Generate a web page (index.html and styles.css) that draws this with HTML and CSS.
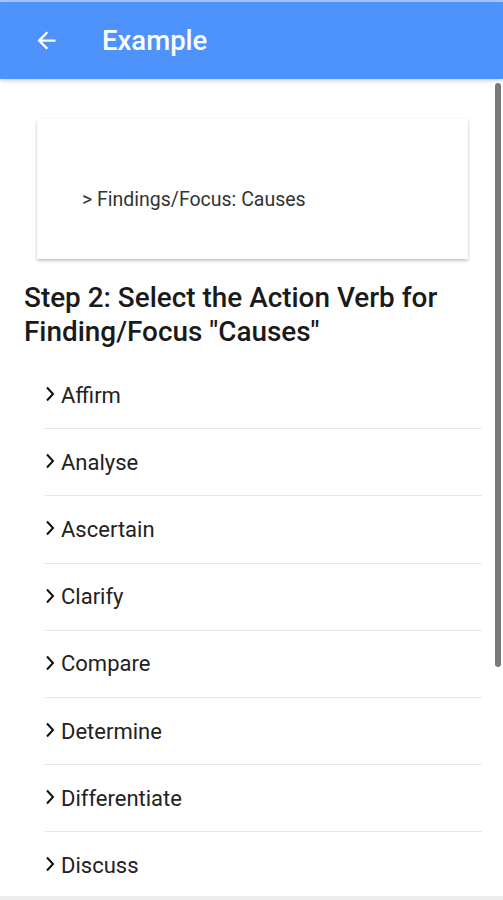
FILE: index.html
```html
<!DOCTYPE html>
<html>
<head>
<meta charset="utf-8">
<link rel="stylesheet" href="styles.css">
</head>
<body>
<div class="topstrip"></div>
<header class="appbar">
  <svg class="back" width="24" height="24" viewBox="0 0 24 24"><path d="M20 11H7.83l5.59-5.59L12 4l-8 8 8 8 1.41-1.41L7.83 13H20v-2z" fill="#fff"/></svg>
  <h1 class="title">Example</h1>
</header>
<main class="content">
  <div class="card">
    <p class="crumb">&gt; Findings/Focus: Causes</p>
  </div>
  <h2 class="heading">Step 2: Select the Action Verb for Finding/Focus "Causes"</h2>
  <ul class="list">
    <li class="item"><svg class="chev" width="10" height="16" viewBox="0 0 10 16"><path d="M2 1.5l6 6.5-6 6.5" fill="none" stroke="#111" stroke-width="2"/></svg><span>Affirm</span></li>
    <li class="item"><svg class="chev" width="10" height="16" viewBox="0 0 10 16"><path d="M2 1.5l6 6.5-6 6.5" fill="none" stroke="#111" stroke-width="2"/></svg><span>Analyse</span></li>
    <li class="item"><svg class="chev" width="10" height="16" viewBox="0 0 10 16"><path d="M2 1.5l6 6.5-6 6.5" fill="none" stroke="#111" stroke-width="2"/></svg><span>Ascertain</span></li>
    <li class="item"><svg class="chev" width="10" height="16" viewBox="0 0 10 16"><path d="M2 1.5l6 6.5-6 6.5" fill="none" stroke="#111" stroke-width="2"/></svg><span>Clarify</span></li>
    <li class="item"><svg class="chev" width="10" height="16" viewBox="0 0 10 16"><path d="M2 1.5l6 6.5-6 6.5" fill="none" stroke="#111" stroke-width="2"/></svg><span>Compare</span></li>
    <li class="item"><svg class="chev" width="10" height="16" viewBox="0 0 10 16"><path d="M2 1.5l6 6.5-6 6.5" fill="none" stroke="#111" stroke-width="2"/></svg><span>Determine</span></li>
    <li class="item"><svg class="chev" width="10" height="16" viewBox="0 0 10 16"><path d="M2 1.5l6 6.5-6 6.5" fill="none" stroke="#111" stroke-width="2"/></svg><span>Differentiate</span></li>
    <li class="item"><svg class="chev" width="10" height="16" viewBox="0 0 10 16"><path d="M2 1.5l6 6.5-6 6.5" fill="none" stroke="#111" stroke-width="2"/></svg><span>Discuss</span></li>
  </ul>
</main>
<div class="scrollbar"></div>
<div class="bottomstrip"></div>
</body>
</html>
```
FILE: styles.css
```css
html, body {
  margin: 0;
  padding: 0;
  height: 900px;
  overflow: hidden;
  background: #fff;
  font-family: Roboto, "Liberation Sans", sans-serif;
}
.topstrip {
  height: 2px;
  background: #a9c6f5;
}
.appbar {
  height: 77px;
  background: #4e92fb;
  display: flex;
  align-items: center;
  padding-left: 33px;
  box-shadow: 0 2px 4px rgba(0,0,0,0.18);
  position: relative;
  z-index: 2;
}
.back {
  width: 27px;
  height: 27px;
}
.title {
  margin: 0 0 0 42px;
  color: #fff;
  font-size: 27.5px;
  font-weight: 500;
}
.content {
  padding: 40px 0 0 0;
}
.card {
  margin: 0 35px 0 37px;
  height: 140px;
  box-sizing: border-box;
  padding: 69px 0 0 45px;
  background: #fff;
  box-shadow: 0 2px 3px rgba(0,0,0,0.22), 0 0 2px rgba(0,0,0,0.06);
}
.crumb {
  margin: 0;
  font-size: 19.5px;
  color: #333;
}
.heading {
  margin: 22px 40px 0 24px;
  font-size: 27.9px;
  line-height: 34px;
  font-weight: 500;
  color: #1a1a1a;
}
.list {
  list-style: none;
  margin: 13px 21px 0 45px;
  padding: 0;
}
.item {
  height: 66.2px;
  display: flex;
  align-items: center;
  border-bottom: 1px solid #e8e8e8;
  font-size: 22px;
  color: #222;
}
.item:last-child {
  border-bottom: none;
}
.chev {
  width: 10px;
  height: 16px;
  margin-right: 6px;
  margin-top: -2px;
}
.scrollbar {
  position: absolute;
  left: 495px;
  top: 83px;
  width: 6px;
  height: 584px;
  border-radius: 3px;
  background: #7a7a7a;
  z-index: 3;
}
.bottomstrip {
  position: absolute;
  left: 0;
  top: 896px;
  width: 503px;
  height: 4px;
  background: #ededed;
  z-index: 3;
}
```
